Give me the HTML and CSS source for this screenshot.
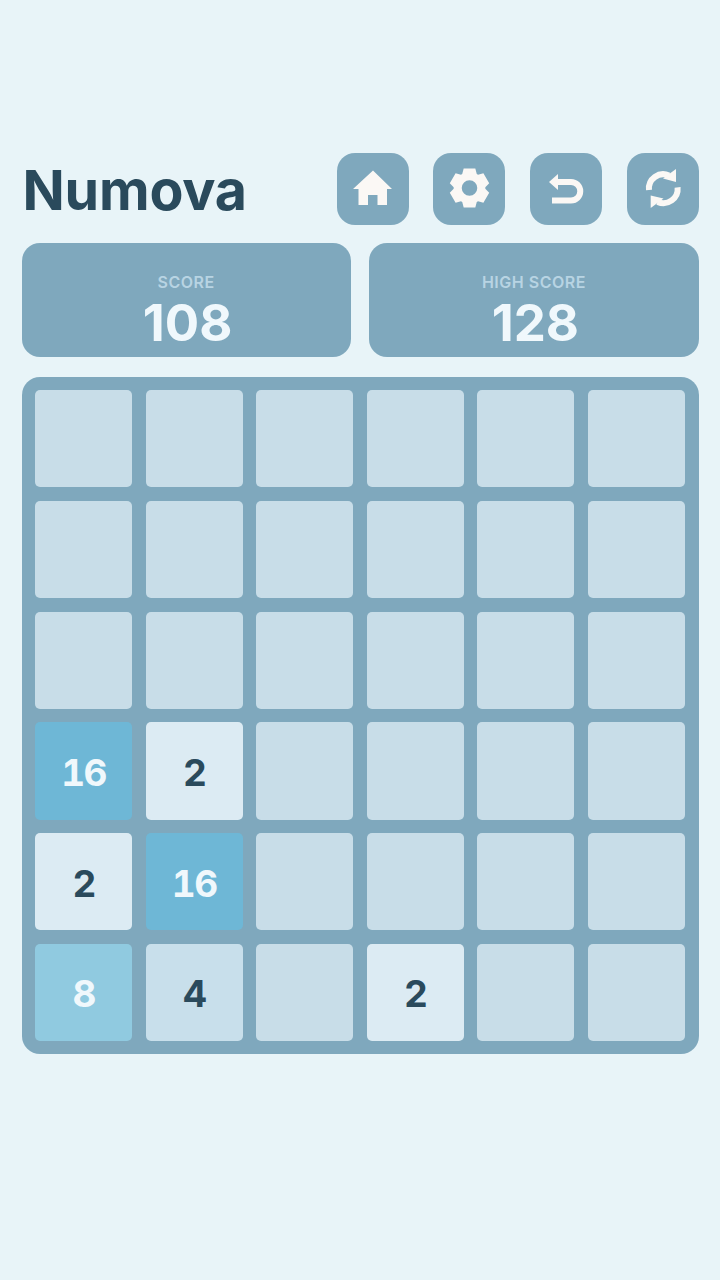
FILE: index.html
```html
<!DOCTYPE html>
<html lang="en">
<head>
<meta charset="utf-8">
<title>Numova</title>
<link rel="stylesheet" href="styles.css">
</head>
<body>
<main class="app">
  <header class="top">
    <h1 class="title">Numova</h1>
    <div class="actions">
      <button class="btn" aria-label="Home"><svg viewBox="0 0 48 48" class="ico"><path d="M24 5.500 4 24H9.500v16H19V30h9.500v10H38V24h5z"/></svg></button>
      <button class="btn" aria-label="Settings"><svg viewBox="0 0 48 48" class="ico"><path fill-rule="evenodd" transform="translate(24.500 23) scale(.97)" d="M-6-20H6L7.500-14.500 8.810-13.750 14.320-15.200 20.320-4.800 16.310-.75V.75L20.320 4.800 14.320 15.200 8.810 13.750 7.500 14.500 6 20H-6L-7.500 14.500-8.810 13.750-14.320 15.200-20.320 4.800-16.310.75V-.75L-20.320-4.800-14.320-15.200-8.810-13.750-7.500-14.500ZM0-8A8 8 0 1 0 0 8 8 8 0 0 0 0-8Z"/></svg></button>
      <button class="btn" aria-label="Undo"><svg viewBox="0 0 48 48" class="ico"><path d="M7 17 16 9V25Z"/><path class="line" d="M15 17H29A9.250 9.250 0 0 1 29 35.500H10"/></svg></button>
      <button class="btn" aria-label="Restart"><svg viewBox="0 0 48 48" class="ico"><path class="line" d="M10 25A14.300 14.300 0 0 1 30 10.500"/><path d="M37 4V17L24 13.500Z"/><path class="line" d="M38.600 22.400A14.300 14.300 0 0 1 18.600 36.900"/><path d="M11.700 43V30.500L24.500 33.500Z"/></svg></button>
    </div>
  </header>
  <section class="scores">
    <div class="score"><div class="label">SCORE</div><div class="value">108</div></div>
    <div class="score"><div class="label">HIGH SCORE</div><div class="value">128</div></div>
  </section>
  <section class="board">
    <div class="cell"></div><div class="cell"></div><div class="cell"></div><div class="cell"></div><div class="cell"></div><div class="cell"></div>
    <div class="cell"></div><div class="cell"></div><div class="cell"></div><div class="cell"></div><div class="cell"></div><div class="cell"></div>
    <div class="cell"></div><div class="cell"></div><div class="cell"></div><div class="cell"></div><div class="cell"></div><div class="cell"></div>
    <div class="cell t16">16</div><div class="cell t2">2</div><div class="cell"></div><div class="cell"></div><div class="cell"></div><div class="cell"></div>
    <div class="cell t2">2</div><div class="cell t16">16</div><div class="cell"></div><div class="cell"></div><div class="cell"></div><div class="cell"></div>
    <div class="cell t8">8</div><div class="cell t4">4</div><div class="cell"></div><div class="cell t2">2</div><div class="cell"></div><div class="cell"></div>
  </section>
</main>
</body>
</html>
```
FILE: styles.css
```css
* { box-sizing: border-box; }
html, body { margin: 0; height: 100%; }
body { background: #e8f4f8; font-family: Inter, "Noto Sans", sans-serif; }
.app { padding: 152.700px 21.500px 0; display: flex; flex-direction: column; }
.top { display: flex; justify-content: space-between; align-items: center; height: 72px; margin-bottom: 18.300px; }
.title { margin: 3px 0 0 1px; font-size: 55.500px; font-weight: 700; letter-spacing: -0.2px; color: #2a4a5c; line-height: 68px; }
.actions { display: flex; gap: 24.670px; }
.btn { width: 72px; height: 72px; border: 0; padding: 0; border-radius: 18px; background: #7fa8bd; display: flex; align-items: center; justify-content: center; }
.ico { width: 48px; height: 48px; fill: #fbf8f5; }
.line { fill: none; stroke: #fbf8f5; stroke-width: 6; }
.scores { display: grid; grid-template-columns: 1fr 1fr; gap: 18.600px; margin-bottom: 19.400px; }
.score { height: 114.500px; border-radius: 18px; background: #7fa8bd; display: flex; flex-direction: column; align-items: center; padding-top: 27px; }
.label { font-size: 16px; font-weight: 600; letter-spacing: 0.5px; line-height: 24px; color: #b8d4e3; }
.value { margin-top: 9px; padding-left: 3px; font-size: 51px; font-weight: 700; line-height: 40px; color: #f0f8fc; }
.board { display: grid; grid-template-columns: repeat(6, 1fr); column-gap: 13.400px; row-gap: 13.600px; padding: 13.200px 13.500px 13px; border-radius: 18px; background: #7fa8bd; }
.cell { aspect-ratio: 1; padding-top: 3px; border-radius: 5px; background: #c8dde8; display: flex; align-items: center; justify-content: center; font-size: 37px; font-weight: 700; letter-spacing: -1.500px; font-variant-numeric: tabular-nums; color: #2a4a5c; }
.t2 { background: #dcebf3; }
.t4 { background: #c8dfeb; }
.t8 { background: #90cae0; color: #f0f8fc; }
.t16 { background: #6eb7d6; color: #f0f8fc; }
```
